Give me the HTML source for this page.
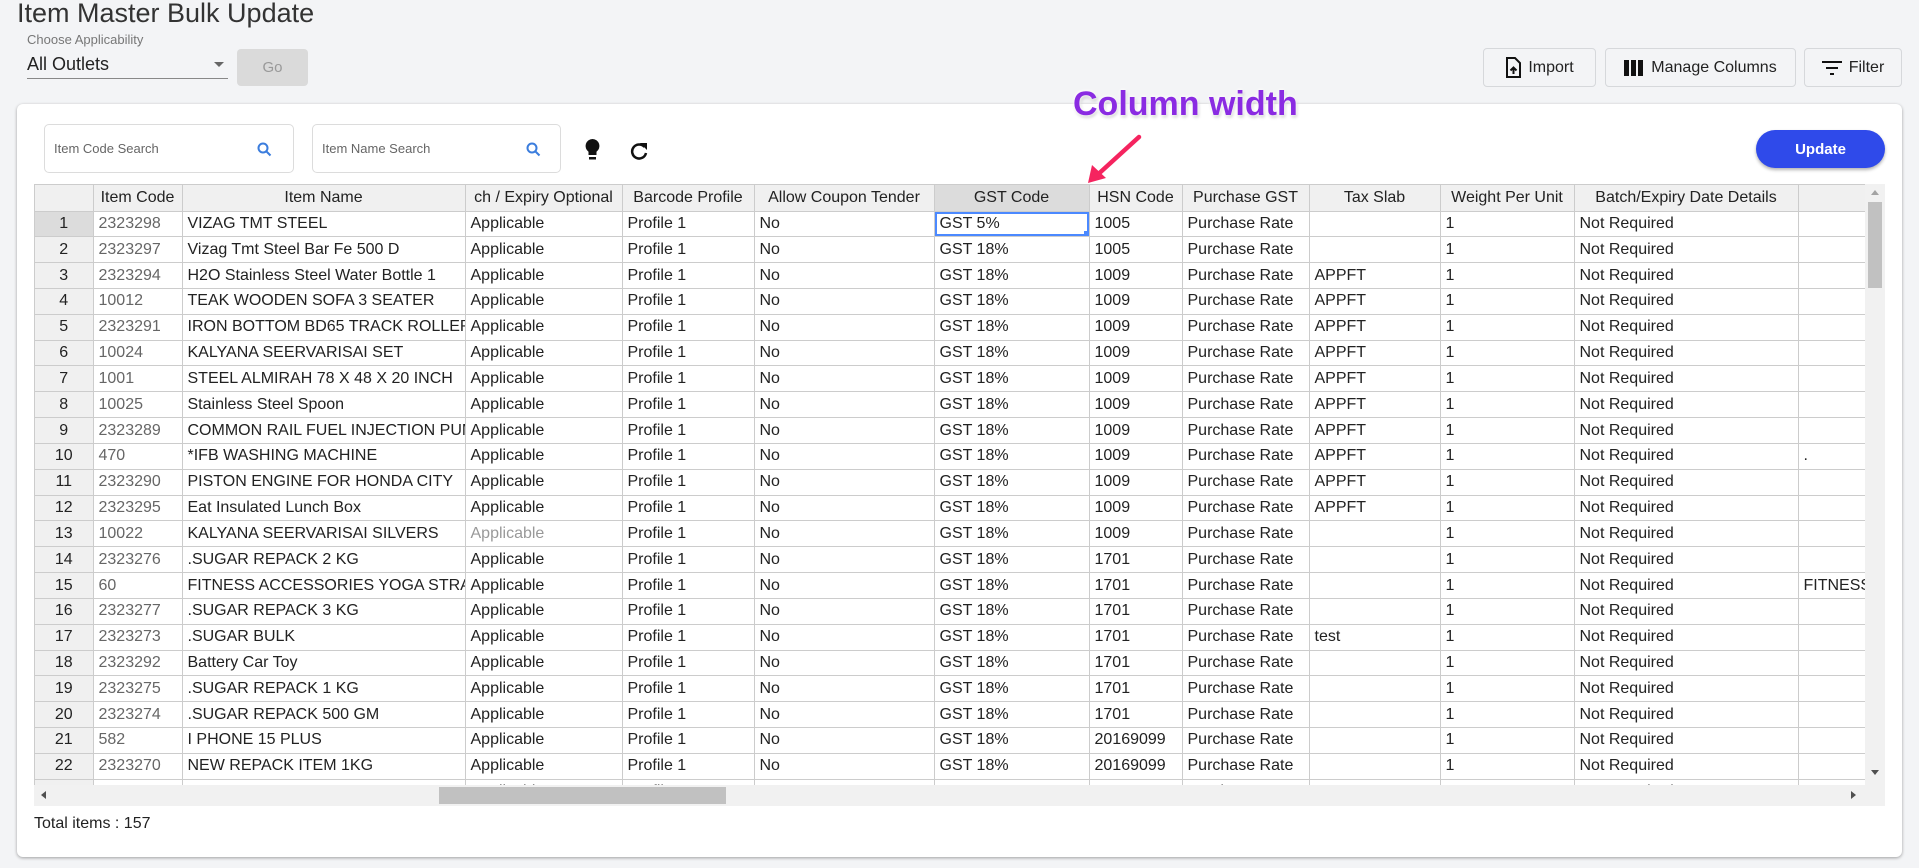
<!DOCTYPE html>
<html><head><meta charset="utf-8"><style>
*{box-sizing:border-box;margin:0;padding:0}
body{width:1919px;height:868px;background:#f3f4f6;font-family:"Liberation Sans",Arial,sans-serif;position:relative;overflow:hidden;color:#222}
.abs{position:absolute}
.btn{position:absolute;border:1px solid #d6d8db;border-radius:4px;background:#f3f4f6;font-size:16px;color:#222;display:flex;align-items:center;justify-content:center;gap:7px}
.card{position:absolute;left:17px;top:104px;width:1885px;height:753px;background:#fff;border-radius:6px;box-shadow:0 1px 3px rgba(0,0,0,.35)}
.search{position:absolute;top:124px;height:49px;border:1px solid #dcdcdc;border-radius:5px;background:#fff;font-size:13px;color:#666;padding-left:9px;display:flex;align-items:center}
.grid{position:absolute;left:34px;top:184px;width:1831px;height:601px;overflow:hidden;border-left:1px solid #ccc;border-top:1px solid #ccc}
table{border-collapse:collapse;table-layout:fixed;font-size:16px;width:1863px}
td,th{border-right:1px solid #ccc;border-bottom:1px solid #ccc;height:25.83px;white-space:nowrap;overflow:hidden;padding:0 5px;text-align:left;font-weight:normal;line-height:24px}
th{background:#f0f0f0;text-align:center;height:26px}
td.rh{background:#f0f0f0;text-align:center;padding:0}
td.c{color:#666}
</style></head><body>
<div class="abs" style="left:17px;top:-2px;font-size:27px;color:#333">Item Master Bulk Update</div>
<div class="abs" style="left:27px;top:32px;font-size:13px;color:#777">Choose Applicability</div>
<div class="abs" style="left:27px;top:54px;font-size:18px;color:#222">All Outlets</div>
<div class="abs" style="left:214px;top:62px;width:0;height:0;border-left:5px solid transparent;border-right:5px solid transparent;border-top:5px solid #666"></div>
<div class="abs" style="left:27px;top:78px;width:201px;height:1px;background:#888"></div>
<div class="abs" style="left:237px;top:49px;width:71px;height:37px;background:#dadada;border-radius:4px;color:#999;font-size:15px;display:flex;align-items:center;justify-content:center">Go</div>

<div class="btn" style="left:1483px;top:48px;width:113px;height:39px"><svg width="16" height="22" viewBox="0 0 16 22"><path d="M2 1h8l5 5v14H2z" fill="none" stroke="#111" stroke-width="2"/><path d="M8.5 17v-6M5.5 13.5l3-3 3 3" stroke="#111" stroke-width="2" fill="none"/></svg>Import</div>
<div class="btn" style="left:1605px;top:48px;width:191px;height:39px"><svg width="20" height="16" viewBox="0 0 20 16"><rect x="0" y="0" width="5" height="16" fill="#111"/><rect x="7" y="0" width="5" height="16" fill="#111"/><rect x="14" y="0" width="5" height="16" fill="#111"/></svg>Manage Columns</div>
<div class="btn" style="left:1804px;top:48px;width:98px;height:39px"><svg width="20" height="14" viewBox="0 0 20 14"><path d="M0 1h20M4 7h12M8 13h4" stroke="#111" stroke-width="2"/></svg>Filter</div>

<div class="card"></div>
<div class="search" style="left:44px;width:250px">Item Code Search<svg class="abs" style="left:212px;top:17px" width="15" height="15" viewBox="0 0 15 15"><circle cx="6" cy="6" r="4.5" fill="none" stroke="#3b7ddd" stroke-width="2"/><path d="M9.5 9.5l4 4" stroke="#3b7ddd" stroke-width="2"/></svg></div>
<div class="search" style="left:312px;width:249px">Item Name Search<svg class="abs" style="left:213px;top:17px" width="15" height="15" viewBox="0 0 15 15"><circle cx="6" cy="6" r="4.5" fill="none" stroke="#3b7ddd" stroke-width="2"/><path d="M9.5 9.5l4 4" stroke="#3b7ddd" stroke-width="2"/></svg></div>
<svg class="abs" style="left:584px;top:138px" width="17" height="25" viewBox="0 0 17 25"><path d="M8.5 1a7 7 0 0 0-4 12.7V17h8v-3.3A7 7 0 0 0 8.5 1z" fill="#111"/><rect x="5" y="19" width="7" height="2.5" fill="#111"/></svg>
<svg class="abs" style="left:629px;top:141px" width="20" height="20" viewBox="0 0 20 20"><path d="M15.5 6A7 7 0 1 0 17 12" fill="none" stroke="#111" stroke-width="2.5"/><path d="M11 2h7v7z" fill="#111"/></svg>
<div class="abs" style="left:1756px;top:130px;width:129px;height:38px;background:#2f4aea;border-radius:19px;color:#fff;font-size:15px;font-weight:bold;display:flex;align-items:center;justify-content:center;box-shadow:0 2px 3px rgba(0,0,0,.3)">Update</div>

<div class="abs" style="left:1073px;top:85px;font-size:34px;font-weight:bold;color:#8a2be2;text-shadow:0 0 3px #fff,0 0 4px #fff,1px 2px 3px rgba(0,0,0,.25)">Column width</div>
<svg class="abs" style="left:1080px;top:130px" width="70" height="60" viewBox="0 0 70 60"><path d="M59 7L14 48" stroke="#f5245f" stroke-width="4.5" stroke-linecap="round"/><path d="M8 53l4-18 14 13z" fill="#f5245f"/></svg>

<div class="grid">
<table>
<colgroup><col style="width:58px"><col style="width:89px"><col style="width:283px"><col style="width:157px"><col style="width:132px"><col style="width:180px"><col style="width:155px"><col style="width:93px"><col style="width:127px"><col style="width:131px"><col style="width:134px"><col style="width:224px"><col style="width:100px"></colgroup>
<tr><th></th><th>Item Code</th><th>Item Name</th><th>ch / Expiry Optional</th><th>Barcode Profile</th><th>Allow Coupon Tender</th><th style="background:#dcdcdc">GST Code</th><th>HSN Code</th><th>Purchase GST</th><th>Tax Slab</th><th>Weight Per Unit</th><th>Batch/Expiry Date Details</th><th></th></tr>
<tr><td class="rh" style="background:#dcdcdc">1</td><td class="c">2323298</td><td>VIZAG TMT STEEL</td><td>Applicable</td><td>Profile 1</td><td>No</td><td style="position:relative;box-shadow:inset 0 0 0 2px #4b89ff">GST 5%<span style="position:absolute;right:-1px;bottom:-1px;width:6px;height:6px;background:#4b89ff"></span></td><td>1005</td><td>Purchase Rate</td><td></td><td>1</td><td>Not Required</td><td></td></tr>
<tr><td class="rh">2</td><td class="c">2323297</td><td>Vizag Tmt Steel Bar Fe 500 D</td><td>Applicable</td><td>Profile 1</td><td>No</td><td>GST 18%</td><td>1005</td><td>Purchase Rate</td><td></td><td>1</td><td>Not Required</td><td></td></tr>
<tr><td class="rh">3</td><td class="c">2323294</td><td>H2O Stainless Steel Water Bottle 1</td><td>Applicable</td><td>Profile 1</td><td>No</td><td>GST 18%</td><td>1009</td><td>Purchase Rate</td><td>APPFT</td><td>1</td><td>Not Required</td><td></td></tr>
<tr><td class="rh">4</td><td class="c">10012</td><td>TEAK WOODEN SOFA 3 SEATER</td><td>Applicable</td><td>Profile 1</td><td>No</td><td>GST 18%</td><td>1009</td><td>Purchase Rate</td><td>APPFT</td><td>1</td><td>Not Required</td><td></td></tr>
<tr><td class="rh">5</td><td class="c">2323291</td><td>IRON BOTTOM BD65 TRACK ROLLER</td><td>Applicable</td><td>Profile 1</td><td>No</td><td>GST 18%</td><td>1009</td><td>Purchase Rate</td><td>APPFT</td><td>1</td><td>Not Required</td><td></td></tr>
<tr><td class="rh">6</td><td class="c">10024</td><td>KALYANA SEERVARISAI SET</td><td>Applicable</td><td>Profile 1</td><td>No</td><td>GST 18%</td><td>1009</td><td>Purchase Rate</td><td>APPFT</td><td>1</td><td>Not Required</td><td></td></tr>
<tr><td class="rh">7</td><td class="c">1001</td><td>STEEL ALMIRAH 78 X 48 X 20 INCH</td><td>Applicable</td><td>Profile 1</td><td>No</td><td>GST 18%</td><td>1009</td><td>Purchase Rate</td><td>APPFT</td><td>1</td><td>Not Required</td><td></td></tr>
<tr><td class="rh">8</td><td class="c">10025</td><td>Stainless Steel Spoon</td><td>Applicable</td><td>Profile 1</td><td>No</td><td>GST 18%</td><td>1009</td><td>Purchase Rate</td><td>APPFT</td><td>1</td><td>Not Required</td><td></td></tr>
<tr><td class="rh">9</td><td class="c">2323289</td><td>COMMON RAIL FUEL INJECTION PUMP</td><td>Applicable</td><td>Profile 1</td><td>No</td><td>GST 18%</td><td>1009</td><td>Purchase Rate</td><td>APPFT</td><td>1</td><td>Not Required</td><td></td></tr>
<tr><td class="rh">10</td><td class="c">470</td><td>*IFB WASHING MACHINE</td><td>Applicable</td><td>Profile 1</td><td>No</td><td>GST 18%</td><td>1009</td><td>Purchase Rate</td><td>APPFT</td><td>1</td><td>Not Required</td><td>.</td></tr>
<tr><td class="rh">11</td><td class="c">2323290</td><td>PISTON ENGINE FOR HONDA CITY</td><td>Applicable</td><td>Profile 1</td><td>No</td><td>GST 18%</td><td>1009</td><td>Purchase Rate</td><td>APPFT</td><td>1</td><td>Not Required</td><td></td></tr>
<tr><td class="rh">12</td><td class="c">2323295</td><td>Eat Insulated Lunch Box</td><td>Applicable</td><td>Profile 1</td><td>No</td><td>GST 18%</td><td>1009</td><td>Purchase Rate</td><td>APPFT</td><td>1</td><td>Not Required</td><td></td></tr>
<tr><td class="rh">13</td><td class="c">10022</td><td>KALYANA SEERVARISAI SILVERS</td><td style="color:#999">Applicable</td><td>Profile 1</td><td>No</td><td>GST 18%</td><td>1009</td><td>Purchase Rate</td><td></td><td>1</td><td>Not Required</td><td></td></tr>
<tr><td class="rh">14</td><td class="c">2323276</td><td>.SUGAR REPACK 2 KG</td><td>Applicable</td><td>Profile 1</td><td>No</td><td>GST 18%</td><td>1701</td><td>Purchase Rate</td><td></td><td>1</td><td>Not Required</td><td></td></tr>
<tr><td class="rh">15</td><td class="c">60</td><td>FITNESS ACCESSORIES YOGA STRAP</td><td>Applicable</td><td>Profile 1</td><td>No</td><td>GST 18%</td><td>1701</td><td>Purchase Rate</td><td></td><td>1</td><td>Not Required</td><td>FITNESS</td></tr>
<tr><td class="rh">16</td><td class="c">2323277</td><td>.SUGAR REPACK 3 KG</td><td>Applicable</td><td>Profile 1</td><td>No</td><td>GST 18%</td><td>1701</td><td>Purchase Rate</td><td></td><td>1</td><td>Not Required</td><td></td></tr>
<tr><td class="rh">17</td><td class="c">2323273</td><td>.SUGAR BULK</td><td>Applicable</td><td>Profile 1</td><td>No</td><td>GST 18%</td><td>1701</td><td>Purchase Rate</td><td>test</td><td>1</td><td>Not Required</td><td></td></tr>
<tr><td class="rh">18</td><td class="c">2323292</td><td>Battery Car Toy</td><td>Applicable</td><td>Profile 1</td><td>No</td><td>GST 18%</td><td>1701</td><td>Purchase Rate</td><td></td><td>1</td><td>Not Required</td><td></td></tr>
<tr><td class="rh">19</td><td class="c">2323275</td><td>.SUGAR REPACK 1 KG</td><td>Applicable</td><td>Profile 1</td><td>No</td><td>GST 18%</td><td>1701</td><td>Purchase Rate</td><td></td><td>1</td><td>Not Required</td><td></td></tr>
<tr><td class="rh">20</td><td class="c">2323274</td><td>.SUGAR REPACK 500 GM</td><td>Applicable</td><td>Profile 1</td><td>No</td><td>GST 18%</td><td>1701</td><td>Purchase Rate</td><td></td><td>1</td><td>Not Required</td><td></td></tr>
<tr><td class="rh">21</td><td class="c">582</td><td>I PHONE 15 PLUS</td><td>Applicable</td><td>Profile 1</td><td>No</td><td>GST 18%</td><td>20169099</td><td>Purchase Rate</td><td></td><td>1</td><td>Not Required</td><td></td></tr>
<tr><td class="rh">22</td><td class="c">2323270</td><td>NEW REPACK ITEM 1KG</td><td>Applicable</td><td>Profile 1</td><td>No</td><td>GST 18%</td><td>20169099</td><td>Purchase Rate</td><td></td><td>1</td><td>Not Required</td><td></td></tr>
<tr><td class="rh">23</td><td class="c">2323269</td><td>NEW BULK ITEM</td><td>Applicable</td><td>Profile 1</td><td>No</td><td>GST 18%</td><td>20169099</td><td>Purchase Rate</td><td></td><td>1</td><td>Not Required</td><td></td></tr>
</table>
</div>
<div class="abs" style="left:1865px;top:184px;width:20px;height:601px;background:#f1f1f1"></div>
<div class="abs" style="left:1868px;top:202px;width:14px;height:86px;background:#c1c1c1"></div>
<div class="abs" style="left:1871px;top:190px;border-left:4px solid transparent;border-right:4px solid transparent;border-bottom:5px solid #a3a3a3"></div>
<div class="abs" style="left:1871px;top:770px;border-left:4px solid transparent;border-right:4px solid transparent;border-top:5px solid #505050"></div>
<div class="abs" style="left:34px;top:785px;width:1851px;height:21px;background:#f1f1f1"></div>
<div class="abs" style="left:439px;top:787px;width:287px;height:17px;background:#c1c1c1"></div>
<div class="abs" style="left:41px;top:791px;border-top:4px solid transparent;border-bottom:4px solid transparent;border-right:5px solid #505050"></div>
<div class="abs" style="left:1851px;top:791px;border-top:4px solid transparent;border-bottom:4px solid transparent;border-left:5px solid #505050"></div>
<div class="abs" style="left:34px;top:815px;font-size:16px;color:#222">Total items : 157</div>
</body></html>
